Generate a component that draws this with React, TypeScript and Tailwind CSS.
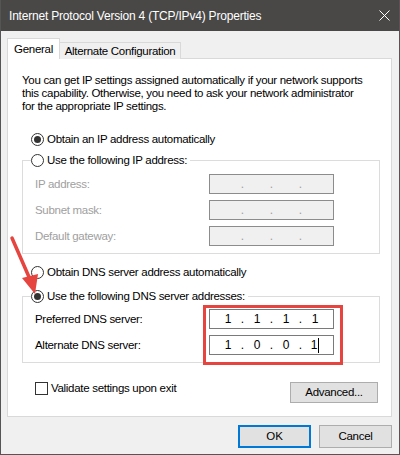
import React from "react";

const font = { fontFamily: '"Liberation Sans", Arial, sans-serif' };

function Radio({ checked, label }: { checked?: boolean; label: string }) {
  return (
    <span className="flex items-center h-[14px] gap-[3px] text-[11.5px] leading-[14px] tracking-[-0.3px] text-black whitespace-nowrap">
      <span className="w-[13px] h-[13px] shrink-0 rounded-full border border-[#333] bg-white flex items-center justify-center">
        {checked && <span className="w-[7px] h-[7px] rounded-full bg-[#333]" />}
      </span>
      {label}
    </span>
  );
}

function IpBox({ octets, disabled, cursor }: { octets: string[]; disabled?: boolean; cursor?: boolean }) {
  return (
    <div
      className={`w-[125px] h-[20px] border flex items-center pl-[6px] text-[12px] leading-[16px] ${
        disabled ? "bg-[#f0f0f0] border-[#8c8c8c] text-[#a0a0a0]" : "bg-white border-[#7a7a7a] text-black"
      }`}
    >
      {octets.map((o, i) => (
        <React.Fragment key={i}>
          <span className="w-[24px] flex justify-center items-center h-[16px]">
            {o}
            {cursor && i === 3 && <span className="w-px h-[15px] bg-black ml-[1px]" />}
          </span>
          {i < 3 && <span className="w-[5px] flex justify-center">.</span>}
        </React.Fragment>
      ))}
    </div>
  );
}

function Row({ label, octets, disabled, cursor }: { label: string; octets: string[]; disabled?: boolean; cursor?: boolean }) {
  return (
    <div className="flex items-center h-[20px]">
      <span className={`w-[174px] text-[11.5px] leading-[14px] tracking-[-0.3px] ${disabled ? "text-[#a0a0a0]" : "text-black"}`}>{label}</span>
      <IpBox octets={octets} disabled={disabled} cursor={cursor} />
    </div>
  );
}

export default function App() {
  const empty = ["", "", "", ""];
  return (
    <div className="relative w-[400px] h-[455px] bg-[#f0f0f0] border-x border-b border-[#555] overflow-hidden" style={font}>
      {/* title bar */}
      <div className="h-[31px] bg-[#494846] flex items-center justify-between pl-[8px] pr-[9px]">
        <span className="text-white text-[12px] tracking-[-0.2px] whitespace-nowrap">Internet Protocol Version 4 (TCP/IPv4) Properties</span>
        <svg width="11" height="11" viewBox="0 0 11 11">
          <path d="M0.5 0.5 L10.5 10.5 M10.5 0.5 L0.5 10.5" stroke="#fff" strokeWidth="1" />
        </svg>
      </div>

      <div className="pl-[6px] pr-[7px]">
        {/* tabs */}
        <div className="flex items-end mt-[7px] -mb-px text-[11.5px] leading-[14px] tracking-[-0.3px] text-black whitespace-nowrap">
          <div className="relative z-10 w-[53px] h-[21px] bg-white border-l border-t border-r border-[#d9d9d9] flex items-center justify-center pb-[1px]">
            General
          </div>
          <div className="w-[121px] h-[17px] bg-[#f0f0f0] border-t border-r border-[#d9d9d9] flex items-center justify-center">
            Alternate Configuration
          </div>
        </div>

        {/* panel */}
        <div className="h-[359px] bg-white border border-[#d9d9d9] pt-[15px] pl-[14px]">
          <p className="text-[11.5px] leading-[13px] tracking-[-0.3px] text-black whitespace-nowrap">
            You can get IP settings assigned automatically if your network supports
            <br />
            this capability. Otherwise, you need to ask your network administrator
            <br />
            for the appropriate IP settings.
          </p>

          <div className="mt-[19px] ml-[9px] flex">
            <Radio checked label="Obtain an IP address automatically" />
          </div>

          <fieldset className="mt-[7px] w-[358px] border border-[#dcdcdc]">
            <legend className="ml-[8px] pr-[3px] h-[14px] leading-[14px]">
              <Radio label="Use the following IP address:" />
            </legend>
            <div className="pl-[12px] pt-[7px] pb-[7px] flex flex-col gap-[6px]">
              <Row label="IP address:" octets={empty} disabled />
              <Row label="Subnet mask:" octets={empty} disabled />
              <Row label="Default gateway:" octets={empty} disabled />
            </div>
          </fieldset>

          <div className="mt-[11px] ml-[9px] flex">
            <Radio label="Obtain DNS server address automatically" />
          </div>

          <fieldset className="mt-[10px] w-[358px] border border-[#dcdcdc]">
            <legend className="ml-[8px] pr-[3px] h-[14px] leading-[14px]">
              <Radio checked label="Use the following DNS server addresses:" />
            </legend>
            <div className="relative pl-[12px] pt-[6px] pb-[7px] flex flex-col gap-[6px]">
              <Row label="Preferred DNS server:" octets={["1", "1", "1", "1"]} />
              <Row label="Alternate DNS server:" octets={["1", "0", "0", "1"]} cursor />
              <div className="absolute left-[180px] top-[2px] w-[140px] h-[60px] border-[3px] border-[#e5443f]" />
            </div>
          </fieldset>

          <div className="mt-[19px] mr-[13px] flex justify-between items-start">
            <label className="ml-[13px] flex items-center gap-[3px] text-[11.5px] leading-[13px] tracking-[-0.3px] text-black h-[13px]">
              <span className="w-[13px] h-[13px] border border-[#333] bg-white" />
              Validate settings upon exit
            </label>
            <button className="w-[88px] h-[21px] bg-[#e1e1e1] border border-[#adadad] text-[11.5px] tracking-[-0.3px] text-black flex items-center justify-center">
              Advanced...
            </button>
          </div>
        </div>

        {/* dialog buttons */}
        <div className="mt-[8px] flex justify-end gap-[8px]">
          <button className="w-[73px] h-[23px] bg-[#e1e1e1] border-2 border-[#0078d7] text-[11.5px] text-black flex items-center justify-center">
            OK
          </button>
          <button className="w-[73px] h-[23px] bg-[#e1e1e1] border border-[#adadad] text-[11.5px] tracking-[-0.3px] text-black flex items-center justify-center">
            Cancel
          </button>
        </div>
      </div>

      {/* annotation arrow */}
      <svg className="absolute left-0 top-[230px]" width="50" height="70" viewBox="0 0 50 70">
        <path d="M11 8 L28 47" stroke="#e5443f" strokeWidth="3.5" strokeLinecap="round" />
        <path d="M21 48 L37 44 L34 64 Z" fill="#e5443f" />
      </svg>
    </div>
  );
}
